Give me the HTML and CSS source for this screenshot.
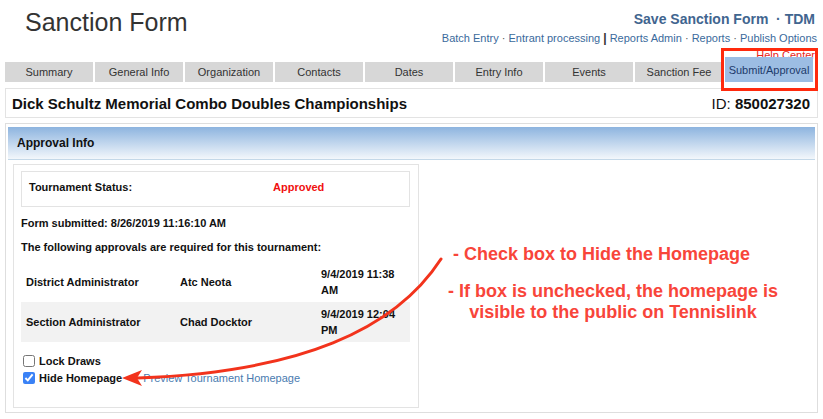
FILE: index.html
```html
<!DOCTYPE html>
<html lang="en">
  <head>
    <meta charset="UTF-8">
    <title>Sanction Form</title>
    <link rel="stylesheet" href="styles.css">
  </head>
  <body>
    <div id="page">
      <div class="header">
        <h1 class="title">Sanction Form</h1>
        <div class="toplinks">
          <div class="save"><a href="#">Save Sanction Form</a> &nbsp;&middot; <a href="#">TDM</a></div>
          <div class="links">
            <a href="#">Batch Entry</a> <span class="sep">&middot;</span>
            <a href="#">Entrant processing</a> <b class="bar">|</b>
            <a href="#">Reports Admin</a> <span class="sep">&middot;</span>
            <a href="#">Reports</a> <span class="sep">&middot;</span>
            <a href="#">Publish Options</a>
          </div>
          <div class="help"><a href="#">Help Center</a></div>
        </div>
      </div>

      <ul class="tabs">
        <li>Summary</li>
        <li>General Info</li>
        <li>Organization</li>
        <li>Contacts</li>
        <li>Dates</li>
        <li>Entry Info</li>
        <li>Events</li>
        <li>Sanction Fee</li>
        <li class="active">Submit/Approval</li>
      </ul>

      <div class="tourney">
        <span class="tname">Dick Schultz Memorial Combo Doubles Championships</span>
        <span class="tid">ID: <b>850027320</b></span>
      </div>

      <div class="panel">
        <div class="panel-head">Approval Info</div>
        <div class="panel-body">
          <div class="approval">
            <div class="status">
              <span class="status-label">Tournament Status:</span>
              <span class="status-value">Approved</span>
            </div>
            <p class="line">Form submitted: 8/26/2019 11:16:10 AM</p>
            <p class="line">The following approvals are required for this tournament:</p>
            <table class="approvers">
              <tr>
                <td class="c1">District Administrator</td>
                <td class="c2">Atc Neota</td>
                <td class="c3">9/4/2019 11:38 AM</td>
              </tr>
              <tr class="alt">
                <td class="c1">Section Administrator</td>
                <td class="c2">Chad Docktor</td>
                <td class="c3">9/4/2019 12:04 PM</td>
              </tr>
            </table>
            <label class="check"><input type="checkbox"> Lock Draws</label>
            <label class="check"><input type="checkbox" checked> Hide Homepage <a class="preview" href="#">Preview Tournament Homepage</a></label>
          </div>
        </div>
      </div>
    </div>

    <!-- annotations drawn on top of the screenshot -->
    <div class="redbox"></div>
    <div class="note note1">- Check box to Hide the Homepage</div>
    <div class="note note2">- If box is unchecked, the homepage is<br>visible to the public on Tennislink</div>
    <svg class="arrow" width="823" height="419" viewBox="0 0 823 419">
      <path d="M441 259 C 395 330, 300 372, 138 378" fill="none" stroke="#f2331c" stroke-width="3" stroke-linecap="round"/>
      <polygon points="122,378 142,370 137,378 142,386" fill="#f2331c"/>
    </svg>
  </body>
</html>
```

FILE: styles.css
```css
* {padding: 0; margin: 0; box-sizing: border-box}
body {
  font-family: "Liberation Sans", Arial, Helvetica, sans-serif;
  color: #222;
  background: #fff;
  width: 823px;
  height: 419px;
  overflow: hidden;
}
a {text-decoration: none;}
#page {
  padding: 0 5px;
}

.header {
  display: flex;
  justify-content: space-between;
  align-items: flex-start;
  height: 57px;
}
.title {
  font-size: 25px;
  font-weight: normal;
  line-height: 29px;
  color: #333;
  margin: 8px 0 0 20px;
}
.toplinks {
  text-align: right;
  padding-top: 11px;
  padding-right: 1px;
}
.save {
  font-size: 14px;
  font-weight: bold;
  line-height: 16px;
  color: #41658f;
  padding-right: 2px;
}
.save a {color: #41658f;}
.links {
  font-size: 11px;
  line-height: 14px;
  margin-top: 4px;
  color: #555;
}
.links a {color: #3a6a9c;}
.links .bar {color: #333; font-size: 12px;}
.help {
  font-size: 11px;
  line-height: 13px;
  margin-top: 4px;
  padding-right: 2px;
}
.help a {color: #e8251b;}

.tabs {
  position: relative;
  list-style: none;
  display: flex;
  align-items: flex-end;
  gap: 2px;
  height: 25px;
  width: 808px;
}
.tabs li {
  flex: 1;
  height: 20px;
  line-height: 20px;
  background: #d7d7d7;
  color: #333;
  font-size: 11px;
  text-align: center;
}
.tabs li.active {
  height: 25px;
  line-height: 27px;
  background: #9cbde3;
  color: #1c3b6b;
}

.tourney {
  margin-top: 6px;
  height: 30px;
  border: 1px solid #e3e3e3;
  display: flex;
  justify-content: space-between;
  align-items: center;
  padding: 0 7px 0 6px;
  font-size: 15px;
  color: #111;
}
.tname {font-weight: bold;}

.panel {
  margin-top: 5px;
  height: 290px;
  border: 1px solid #dedede;
  padding: 3px 2px;
}
.panel-head {
  height: 33px;
  line-height: 32px;
  padding-left: 9px;
  font-size: 12px;
  font-weight: bold;
  color: #111;
  background: linear-gradient(#8db4df, #f3f7fb);
  border-bottom: 1px solid #c4d8e8;
}
.panel-body {
  padding: 4px 5px;
}
.approval {
  width: 406px;
  height: 244px;
  border: 1px solid #e3e3e3;
  padding: 6px 8px 0 7px;
  font-size: 11px;
  font-weight: bold;
  color: #111;
}
.status {
  display: flex;
  border: 1px solid #e3e3e3;
  padding: 7px 7px 11px;
  line-height: 16px;
}
.status-label {width: 244px;}
.status-value {color: #f0100f;}
.line {
  line-height: 16px;
  margin-top: 8px;
}
.approvers {
  margin-top: 7px;
  width: 389px;
  border-collapse: collapse;
  table-layout: fixed;
}
.approvers td {
  height: 40px;
  padding: 4px 5px;
  line-height: 16px;
  vertical-align: middle;
}
.approvers .c1 {width: 154px;}
.approvers .c2 {width: 141px;}
.approvers tr.alt {background: #f2f2f2;}
.check {
  display: flex;
  align-items: center;
  height: 17px;
}
.approvers + .check {margin-top: 10px;}
.check input {
  width: 12px;
  height: 12px;
  margin: 0 4px 0 2px;
  accent-color: #3a82f6;
}
.preview {
  margin-left: 21px;
  font-weight: normal;
  color: #4a7bb0;
}

.redbox {
  position: absolute;
  left: 721px;
  top: 48px;
  width: 97px;
  height: 43px;
  border: 3px solid #ff2a0d;
}
.note {
  position: absolute;
  font-size: 18px;
  font-weight: bold;
  line-height: 21px;
  color: #f8453a;
}
.note1 {
  left: 453px;
  top: 244px;
}
.note2 {
  left: 413px;
  top: 281px;
  width: 400px;
  text-align: center;
}
.arrow {
  position: absolute;
  left: 0;
  top: 0;
  pointer-events: none;
}
```
